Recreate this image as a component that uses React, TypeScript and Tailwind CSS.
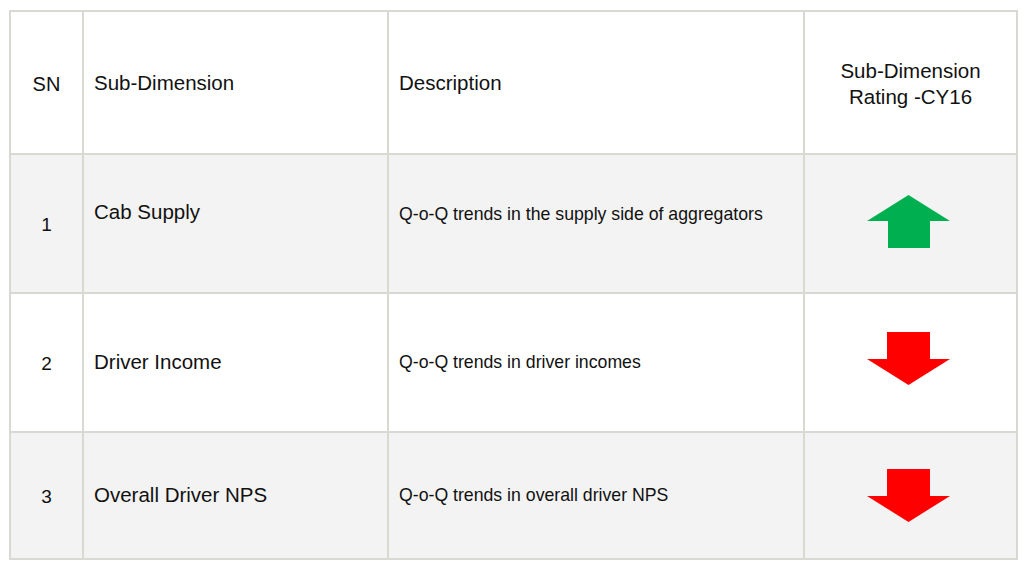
import { Fragment } from "react";

const rows = [
  {
    sn: "1",
    name: "Cab Supply",
    desc: "Q-o-Q trends in the supply side of aggregators",
    up: true,
    shaded: true,
    shift: true,
  },
  {
    sn: "2",
    name: "Driver Income",
    desc: "Q-o-Q trends in driver incomes",
    up: false,
    shaded: false,
    shift: false,
  },
  {
    sn: "3",
    name: "Overall Driver NPS",
    desc: "Q-o-Q trends in overall driver NPS",
    up: false,
    shaded: true,
    shift: false,
  },
];

function UpArrow() {
  return (
    <svg width="83" height="53" viewBox="0 0 83 53">
      <polygon points="41.5,0 83,26 63,26 63,53 21,53 21,26 0,26" fill="#00b050" />
    </svg>
  );
}

function DownArrow() {
  return (
    <svg width="83" height="53" viewBox="0 0 83 53">
      <polygon points="20,0 63,0 63,27 83,27 41.5,53 0,27 20,27" fill="#ff0000" />
    </svg>
  );
}

export default function App() {
  return (
    <div
      className="w-[1024px] h-[572px] bg-white pt-[10px] pl-[9px] text-[#111111]"
      style={{ fontFamily: '"Liberation Sans", Arial, sans-serif' }}
    >
      <div className="grid w-[1009px] grid-cols-[71px_303px_414px_211px] grid-rows-[141px_137px_137px_125px] gap-[2px] p-[2px] bg-[#d9d9d3]">
        {/* Header */}
        <div className="bg-white flex items-center justify-center pt-[2px] text-[20px]">SN</div>
        <div className="bg-white flex items-center pl-[10px] pt-[2px] text-[20.5px]">Sub-Dimension</div>
        <div className="bg-white flex items-center pl-[10px] pt-[2px] text-[20.5px]">Description</div>
        <div className="bg-white flex items-center justify-center text-center pt-[2px] text-[20.5px] leading-[26px]">
          Sub-Dimension
          <br />
          Rating -CY16
        </div>

        {rows.map((r) => {
          const bg = r.shaded ? "bg-[#f3f3f3]" : "bg-white";
          return (
            <Fragment key={r.sn}>
              <div className={`${bg} flex items-center justify-center pt-[4px] text-[19px]`}>
                {r.sn}
              </div>
              <div className={`${bg} flex items-center pl-[10px] text-[20.5px] ${r.shift ? "pb-[22px]" : ""}`}>
                {r.name}
              </div>
              <div className={`${bg} flex items-center pl-[10px] text-[17.7px] ${r.shift ? "pb-[18px]" : ""}`}>
                {r.desc}
              </div>
              <div
                className={`${bg} flex items-center justify-center pr-[4px] ${r.shift ? "pb-[4px]" : ""} ${!r.shift && !r.shaded ? "pb-[8px]" : ""}`}
              >
                {r.up ? <UpArrow /> : <DownArrow />}
              </div>
            </Fragment>
          );
        })}
      </div>
    </div>
  );
}
